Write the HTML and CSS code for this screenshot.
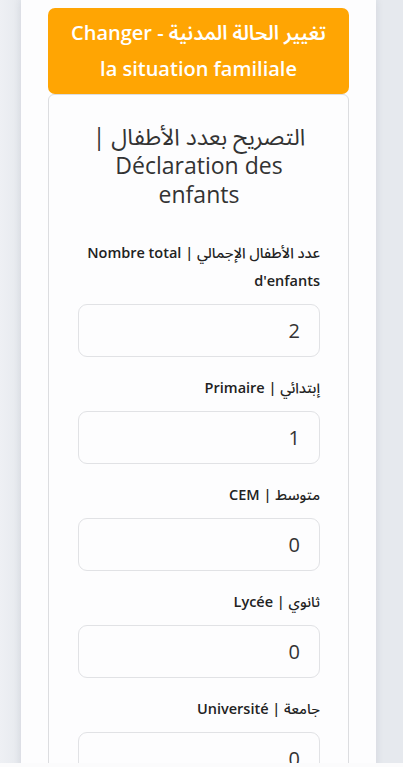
FILE: index.html
```html
<!DOCTYPE html>
<html lang="ar">
<head>
<meta charset="utf-8">
<meta name="viewport" content="width=device-width, initial-scale=1">
<title>Déclaration des enfants</title>
<link rel="stylesheet" href="styles.css">
</head>
<body>
<div class="page">
  <div class="banner" dir="rtl"><span class="ar">تغيير الحالة المدنية</span> - Changer la situation familiale</div>
  <div class="card" dir="rtl">
    <h2 class="title"><span class="ar">التصريح بعدد الأطفال</span> | Déclaration des enfants</h2>
    <form class="form">
      <div class="group">
        <label class="label"><span class="ar">عدد الأطفال الإجمالي</span> | Nombre total d'enfants</label>
        <input class="field" type="text" value="2">
      </div>
      <div class="group">
        <label class="label"><span class="ar">إبتدائي</span> | Primaire</label>
        <input class="field" type="text" value="1">
      </div>
      <div class="group">
        <label class="label"><span class="ar">متوسط</span> | CEM</label>
        <input class="field" type="text" value="0">
      </div>
      <div class="group">
        <label class="label"><span class="ar">ثانوي</span> | Lycée</label>
        <input class="field" type="text" value="0">
      </div>
      <div class="group">
        <label class="label"><span class="ar">جامعة</span> | Université</label>
        <input class="field" type="text" value="0">
      </div>
    </form>
  </div>
</div>
<div class="bottom-strip"></div>
</body>
</html>
```
FILE: styles.css
```css
html, body {
  margin: 0;
  padding: 0;
}
body {
  background: linear-gradient(to right, #eef0f4 0, #e6e9ee 21px, #e6e9ee 100%);
  font-family: "Open Sans", "Noto Sans Arabic", "DejaVu Sans", sans-serif;
  color: #222;
  height: 767px;
  overflow: hidden;
}
.page {
  width: 355px;
  margin: 0 27px 0 21px;
  background: #fdfdfe;
  box-shadow: 0 0 8px rgba(30, 40, 70, 0.10);
  padding: 8px 27px 40px;
  box-sizing: border-box;
  min-height: 767px;
}
.ar {
  font-family: "Noto Sans Arabic", "DejaVu Sans", sans-serif;
  line-height: 1;
}
.banner {
  background: #ffa503;
  color: #fff;
  border-radius: 7px;
  text-align: center;
  font-size: 20px;
  font-weight: 600;
  line-height: 36px;
  padding: 7px 16px;
}
.banner .ar {
  font-weight: 600;
}
.card {
  border: 1px solid #dcdde0;
  border-radius: 6px;
  padding: 27px 28px 20px 29px;
  background: #fdfdfe;
}
.title {
  margin: 0 0 30px;
  text-align: center;
  font-size: 23px;
  font-weight: 400;
  line-height: 29px;
  color: #333;
}
.form {
  display: flex;
  flex-direction: column;
  gap: 17px;
}
.group {
  display: flex;
  flex-direction: column;
  gap: 9px;
}
.label {
  font-size: 14.5px;
  font-weight: 600;
  line-height: 28px;
  color: #222;
  text-align: right;
}
.label .ar {
  font-weight: 500;
}
.field {
  direction: rtl;
  box-sizing: border-box;
  width: 100%;
  height: 53px;
  border: 1px solid #e1e2e5;
  border-radius: 9px;
  background: #fdfdfe;
  padding: 0 19px;
  font-family: "Open Sans", sans-serif;
  font-size: 20px;
  color: #333;
  text-align: right;
  outline: none;
}
.bottom-strip {
  position: fixed;
  left: 0;
  right: 0;
  bottom: 0;
  height: 4px;
  background: #fbfbfc;
}
```
